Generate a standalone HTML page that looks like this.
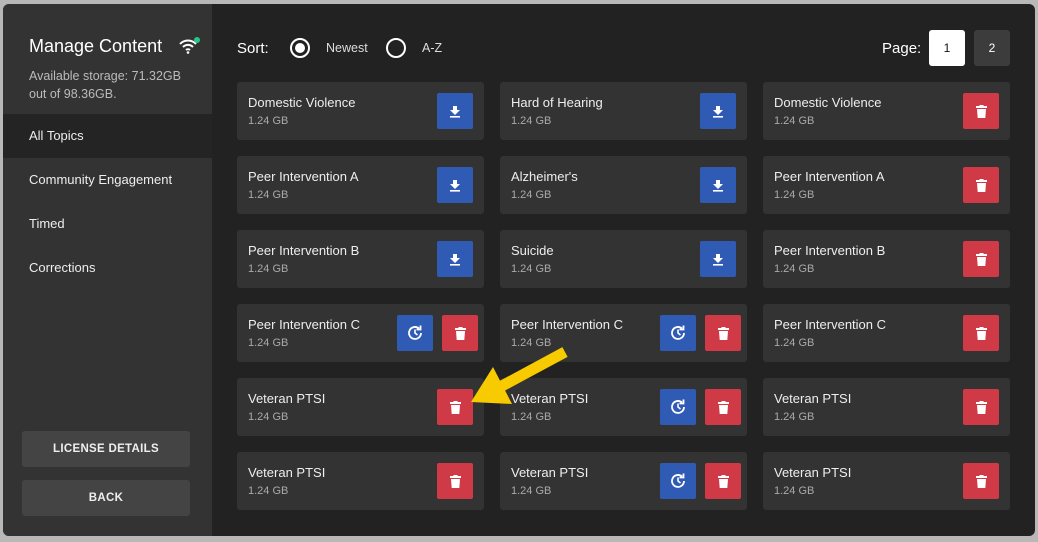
<!DOCTYPE html>
<html><head><style>
*{box-sizing:border-box;margin:0;padding:0}
body{width:1038px;height:542px;background:#b8b8b8;font-family:"Liberation Sans",sans-serif;position:relative;overflow:hidden}
.panel{position:absolute;left:3px;top:4px;width:1032px;height:532px;background:#222;border-radius:6px;overflow:hidden}
.side{position:absolute;left:0;top:0;width:209px;height:532px;background:#333}
.side h1{position:absolute;left:26px;top:32px;font-size:18px;font-weight:normal;color:#fff}
.side .st{position:absolute;left:26px;top:63px;font-size:12.5px;color:#bbb;line-height:18px}
.nav{position:absolute;left:0;width:209px;height:44px;padding-left:26px;line-height:44px;font-size:13px;color:#eee}
.nav.a{background:#242424}
.sbtn{position:absolute;left:19px;width:168px;height:36px;background:#444;border-radius:3px;color:#eee;font-size:11.5px;font-weight:bold;text-align:center;line-height:36px;letter-spacing:.3px}
.card{position:absolute;width:247px;height:58px;background:#333;border-radius:3px}
.card .t{position:absolute;left:11px;top:13px;font-size:13px;color:#eee}
.card .s{position:absolute;left:11px;top:33px;font-size:11px;color:#aaa}
.b{position:absolute;top:11px;width:36px;height:36px;border-radius:2px;display:flex;align-items:center;justify-content:center}
.bl{background:#2f5bb5}.rd{background:#cf3a46}
</style></head><body>
<div class="panel">
<div class="side">
<h1>Manage Content</h1>
<svg style="position:absolute;left:175px;top:33px" width="24" height="18" viewBox="0 0 24 18"><path d="M2 7a11 11 0 0 1 16 0M5 10a7 7 0 0 1 10 0M8 13a3 3 0 0 1 4 0" stroke="#fff" stroke-width="2" fill="none"/><circle cx="10" cy="15.5" r="1.3" fill="#fff"/><circle cx="19" cy="3" r="3" fill="#22c98a"/></svg>
<div class="st">Available storage: 71.32GB<br>out of 98.36GB.</div>
<div class="nav a" style="top:110px">All Topics</div>
<div class="nav" style="top:154px">Community Engagement</div>
<div class="nav" style="top:198px">Timed</div>
<div class="nav" style="top:242px">Corrections</div>
<div class="sbtn" style="top:427px">LICENSE DETAILS</div>
<div class="sbtn" style="top:476px">BACK</div>
</div>
<div style="position:absolute;left:234px;top:36px;font-size:15px;color:#fff">Sort:</div>
<div style="position:absolute;left:287px;top:34px;width:20px;height:20px;border:2px solid #fff;border-radius:50%"><div style="position:absolute;left:3px;top:3px;width:10px;height:10px;border-radius:50%;background:#fff"></div></div>
<div style="position:absolute;left:323px;top:37px;font-size:12.5px;color:#ddd">Newest</div>
<div style="position:absolute;left:383px;top:34px;width:20px;height:20px;border:2px solid #fff;border-radius:50%"></div>
<div style="position:absolute;left:419px;top:37px;font-size:12.5px;color:#ddd">A-Z</div>
<div style="position:absolute;left:879px;top:36px;font-size:15px;color:#fff">Page:</div>
<div style="position:absolute;left:926px;top:26px;width:36px;height:36px;background:#fff;border-radius:3px;text-align:center;line-height:36px;font-size:12px;color:#111">1</div>
<div style="position:absolute;left:971px;top:26px;width:36px;height:36px;background:#3c3c3c;border-radius:3px;text-align:center;line-height:36px;font-size:12px;color:#fff">2</div>
<div id="cards"></div>
<svg style="position:absolute;left:0;top:0" width="1032" height="532"><line x1="562" y1="348" x2="497" y2="383" stroke="#f7cb00" stroke-width="11"/><polygon points="468,398 490,363 509,400" fill="#f7cb00"/></svg>
</div>
<script>
var dl='<svg width="12" height="13" viewBox="0 0 12 13"><path d="M4 1h4v4h3L6 10 1 5h3z" fill="#fff"/><rect x="1" y="11" width="10" height="1.6" fill="#fff"/></svg>';
var tr='<svg width="11" height="13" viewBox="0 0 11 13"><rect x="0" y="1" width="11" height="2" fill="#fff"/><rect x="3.5" y="0" width="4" height="2" fill="#fff"/><path d="M1 4h9l-.7 9H1.7z" fill="#fff"/></svg>';
var ck='<svg width="18" height="18" viewBox="0 0 18 18"><path d="M15 9a6 6 0 1 1-2-4.5" stroke="#fff" stroke-width="1.8" fill="none"/><path d="M14.5 1.5v4h-4" stroke="#fff" stroke-width="1.8" fill="none"/><path d="M9 5.5V9l2.5 2" stroke="#fff" stroke-width="1.6" fill="none"/></svg>';
var d=[
[["Domestic Violence","d"],["Hard of Hearing","d"],["Domestic Violence","r"]],
[["Peer Intervention A","d"],["Alzheimer's","d"],["Peer Intervention A","r"]],
[["Peer Intervention B","d"],["Suicide","d"],["Peer Intervention B","r"]],
[["Peer Intervention C","cr"],["Peer Intervention C","cr"],["Peer Intervention C","r"]],
[["Veteran PTSI","r"],["Veteran PTSI","cr"],["Veteran PTSI","r"]],
[["Veteran PTSI","r"],["Veteran PTSI","cr"],["Veteran PTSI","r"]]];
var h='',xs=[234,497,760];
d.forEach(function(r,i){r.forEach(function(c,j){
var b='';
if(c[1]=='d')b='<div class="b bl" style="left:200px">'+dl+'</div>';
else if(c[1]=='r')b='<div class="b rd" style="left:200px">'+tr+'</div>';
else b='<div class="b bl" style="left:160px">'+ck+'</div><div class="b rd" style="left:205px">'+tr+'</div>';
h+='<div class="card" style="left:'+xs[j]+'px;top:'+(78+i*74)+'px"><div class="t">'+c[0]+'</div><div class="s">1.24 GB</div>'+b+'</div>';
});});
document.getElementById('cards').innerHTML=h;
</script>
</body></html>
